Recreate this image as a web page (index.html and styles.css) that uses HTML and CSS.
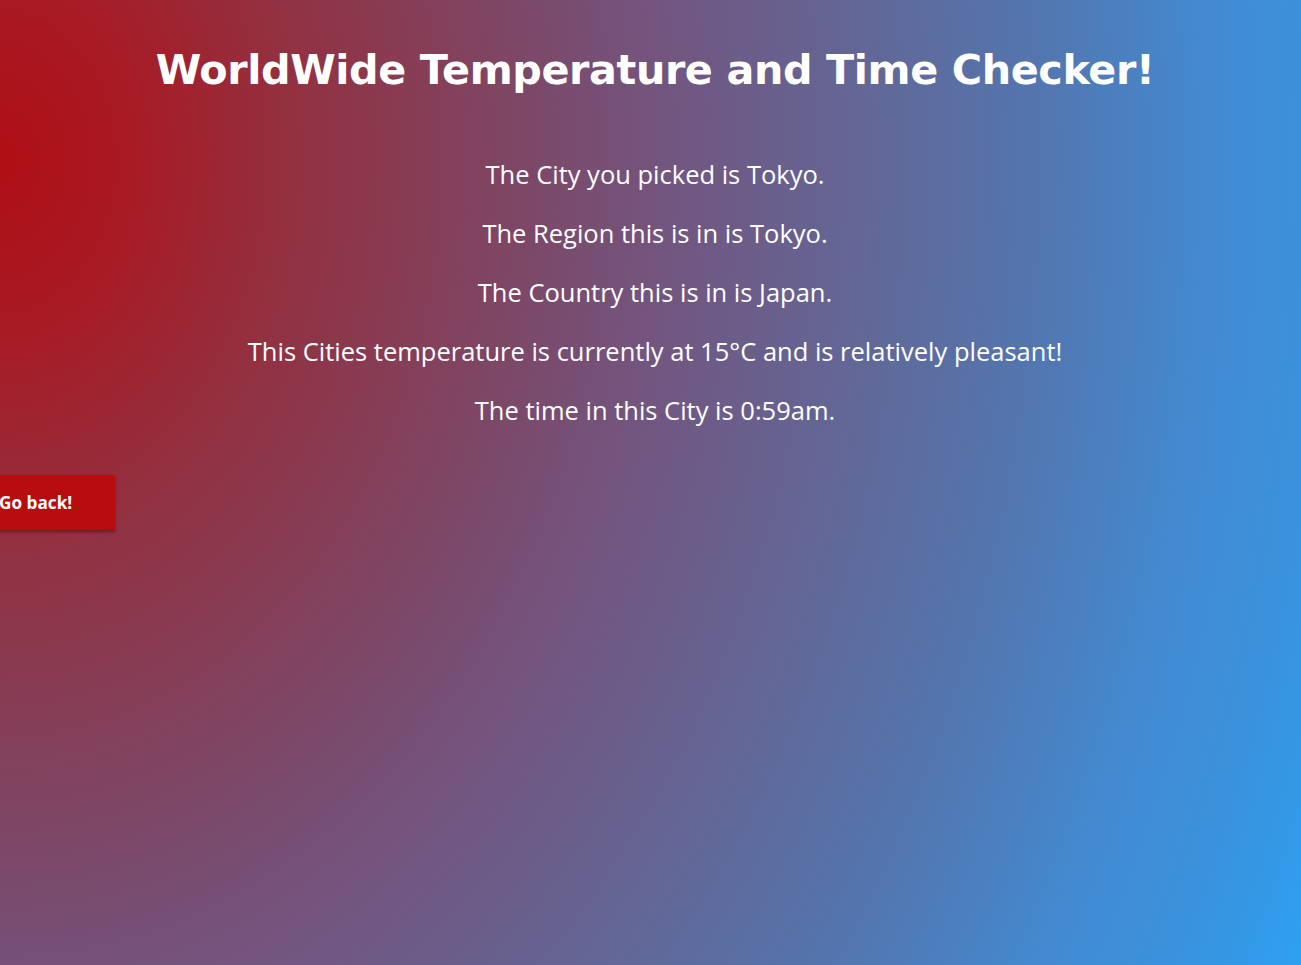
FILE: index.html
```html
<!DOCTYPE html>
<html lang="en">
<head>
<meta charset="utf-8">
<title>WorldWide Temperature and Time Checker!</title>
<link rel="stylesheet" href="styles.css">
</head>
<body>
<main class="page">
  <h1 class="title">WorldWide Temperature and Time Checker!</h1>
  <section class="info">
    <p class="line">The City you picked is Tokyo.</p>
    <p class="line">The Region this is in is Tokyo.</p>
    <p class="line">The Country this is in is Japan.</p>
    <p class="line">This Cities temperature is currently at 15°C and is relatively pleasant!</p>
    <p class="line">The time in this City is 0:59am.</p>
  </section>
  <div class="actions">
    <button class="back" type="button">Go back!</button>
  </div>
</main>
</body>
</html>
```

FILE: styles.css
```css
html, body {
  margin: 0;
  padding: 0;
  height: 100%;
}

body {
  background: radial-gradient(ellipse 1440px 1872px at 0 160px,
    #b00f15 0%, #a81a24 9%, #93303f 20%, #7c4868 37%, #73557f 46%,
    #616898 61%, #5277b1 73%, #438ad0 84%, #3a92dd 92%, #2da0f0 100%);
  background-color: #2da0f0;
  color: #ffffff;
  font-family: "DejaVu Sans", sans-serif;
  overflow: hidden;
}

.page {
  display: flex;
  flex-direction: column;
  min-height: 100%;
}

.title {
  margin: 42px 0 0;
  padding-left: 9px;
  text-align: center;
  font-family: "DejaVu Sans", sans-serif;
  font-weight: 700;
  font-size: 41.3px;
  line-height: 56px;
  letter-spacing: -0.4px;
}

.info {
  margin-top: 58px;
  padding-left: 9px;
  display: flex;
  flex-direction: column;
  gap: 23px;
  align-items: center;
}

.line {
  margin: 0;
  font-family: "Open Sans", sans-serif;
  font-size: 25.5px;
  line-height: 36px;
  text-align: center;
}

.actions {
  margin-top: 47px;
  display: flex;
}

.back {
  margin-left: -30px;
  height: 55px;
  padding: 0 43px 0 29px;
  border: none;
  background: #b80c0e;
  color: #ffffff;
  font-family: "Open Sans", sans-serif;
  font-weight: 700;
  font-size: 17.2px;
  box-shadow: 0 2px 3px rgba(60, 0, 10, 0.45);
  cursor: pointer;
}
```
